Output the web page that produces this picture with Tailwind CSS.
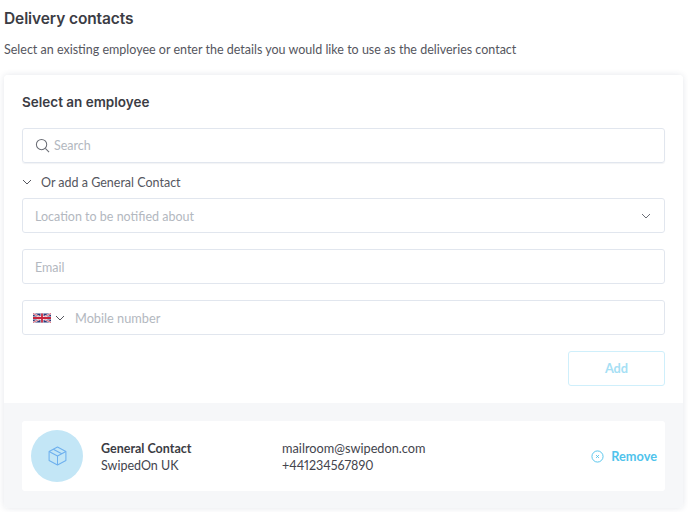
<!DOCTYPE html>
<html lang="en">
<head>
    <meta charset="UTF-8">
    <title>Delivery contacts</title>
    <script src="https://cdn.jsdelivr.net/npm/@tailwindcss/browser@4"></script>
</head>
<body class="bg-white font-['Lato',sans-serif] text-[#43444d] h-[512px] overflow-hidden">
    <div class="px-1 pt-[8px]">
        <h1 class="font-['Inter',sans-serif] text-[15.5px] leading-[22px] font-semibold tracking-[-0.1px] text-[#3b3c44]">Delivery contacts</h1>
        <p class="mt-[11px] text-[12.5px] leading-[18px] text-[#55565e]">Select an existing employee or enter the details you would like to use as the deliveries contact</p>

        <!-- Card -->
        <div class="mt-[16px] w-[679px] h-[433px] rounded shadow-[0_0_6px_rgba(30,50,80,0.12)] flex flex-col overflow-hidden">
            <div class="bg-white h-[328px] px-[18px] pt-[17px] shrink-0">
                <h2 class="font-['Inter',sans-serif] text-[13.5px] leading-5 font-semibold text-[#3b3c44]">Select an employee</h2>

                <div class="mt-[16px] h-[35px] border border-[#e1e6ee] rounded-[3px] flex items-center pl-3 shadow-[0_1px_1px_rgba(30,50,80,0.06)]">
                    <svg class="w-[15px] h-[15px] text-[#6b6e76]" viewBox="0 0 16 16" fill="none" stroke="currentColor" stroke-width="1.1"><circle cx="7" cy="7" r="5.5"/><path d="M11 11l4 4"/></svg>
                    <span class="ml-[4px] pt-[2px] text-[12.5px] text-[#b3b8c0]">Search</span>
                </div>

                <div class="mt-[10px] h-[17px] flex items-center">
                    <svg class="w-[10px] h-[10px] text-[#55565e]" viewBox="0 0 10 10" fill="none" stroke="currentColor" stroke-width="1"><path d="M1 3l4 4 4-4"/></svg>
                    <span class="ml-[9px] pt-[3px] text-[12.5px] text-[#55565e]">Or add a General Contact</span>
                </div>

                <div class="mt-[8px] h-[35px] border border-[#e1e6ee] rounded-[3px] flex items-center justify-between pl-3 pr-[13px]">
                    <span class="pt-[3px] text-[12.5px] text-[#b3b8c0]">Location to be notified about</span>
                    <svg class="w-[10px] h-[10px] text-[#6b6e76]" viewBox="0 0 10 10" fill="none" stroke="currentColor" stroke-width="1"><path d="M1 3l4 4 4-4"/></svg>
                </div>

                <div class="mt-[16px] h-[35px] border border-[#e1e6ee] rounded-[3px] flex items-center pl-3">
                    <span class="pt-[3px] text-[12.5px] text-[#b3b8c0]">Email</span>
                </div>

                <div class="mt-[16px] h-[35px] border border-[#e1e6ee] rounded-[3px] flex items-center pl-[10px]">
                    <svg class="w-[18px] h-[10px]" viewBox="0 0 60 30">
                        <rect width="60" height="30" fill="#2b3a7a"/>
                        <path d="M0 0L60 30M60 0L0 30" stroke="#fff" stroke-width="6"/>
                        <path d="M0 0L60 30M60 0L0 30" stroke="#c8243c" stroke-width="2.5"/>
                        <path d="M30 0V30M0 15H60" stroke="#fff" stroke-width="10"/>
                        <path d="M30 0V30M0 15H60" stroke="#c8243c" stroke-width="6"/>
                    </svg>
                    <svg class="ml-[4px] w-[10px] h-[10px] text-[#55565e]" viewBox="0 0 10 10" fill="none" stroke="currentColor" stroke-width="1"><path d="M1 3l4 4 4-4"/></svg>
                    <span class="ml-[10px] pt-[2px] text-[12.75px] text-[#b3b8c0]">Mobile number</span>
                </div>

                <div class="mt-[16px] flex justify-end">
                    <button class="w-[97px] h-[35px] border border-[#cfeffb] rounded-[3px] text-[12.75px] font-bold text-[#a5e0f5]">Add</button>
                </div>
            </div>

            <!-- Contact list -->
            <div class="flex-1 bg-[#f6f7f9] px-[18px] pt-[18px]">
                <div class="h-[70px] bg-white rounded-[3px] flex items-center pl-[9px] pr-[8px] text-[12.5px] leading-[17px]">
                    <div class="w-[52px] h-[52px] rounded-full bg-[#c3e6f6] flex items-center justify-center shrink-0">
                        <svg class="w-[21px] h-[22px] text-[#6eb0ee]" viewBox="0 0 20 20" fill="none" stroke="currentColor" stroke-width="1" stroke-linejoin="round"><path d="M10 1.500l8 4.200v8.600l-8 4.200-8-4.200V5.700z"/><path d="M2 5.700l8 4.300 8-4.300M10 10v8.500M6 3.600l8 4.300"/></svg>
                    </div>
                    <div class="ml-[18px] w-[181px] pt-px">
                        <div class="font-bold text-[#3b3c44]">General Contact</div>
                        <div>SwipedOn UK</div>
                    </div>
                    <div class="flex-1 pt-px">
                        <div class="text-[12.75px]">mailroom@swipedon.com</div>
                        <div class="proportional-nums">+441234567890</div>
                    </div>
                    <div class="flex items-center text-[12.75px] text-[#4fc3ec] font-bold">
                        <svg class="w-[13px] h-[13px]" viewBox="0 0 14 14" fill="none" stroke="currentColor" stroke-width="1"><circle cx="7" cy="7" r="6"/><path d="M5.500 5.500l3 3M8.500 5.500l-3 3"/></svg>
                        <span class="ml-[7px]">Remove</span>
                    </div>
                </div>
            </div>
        </div>
    </div>
</body>
</html>
